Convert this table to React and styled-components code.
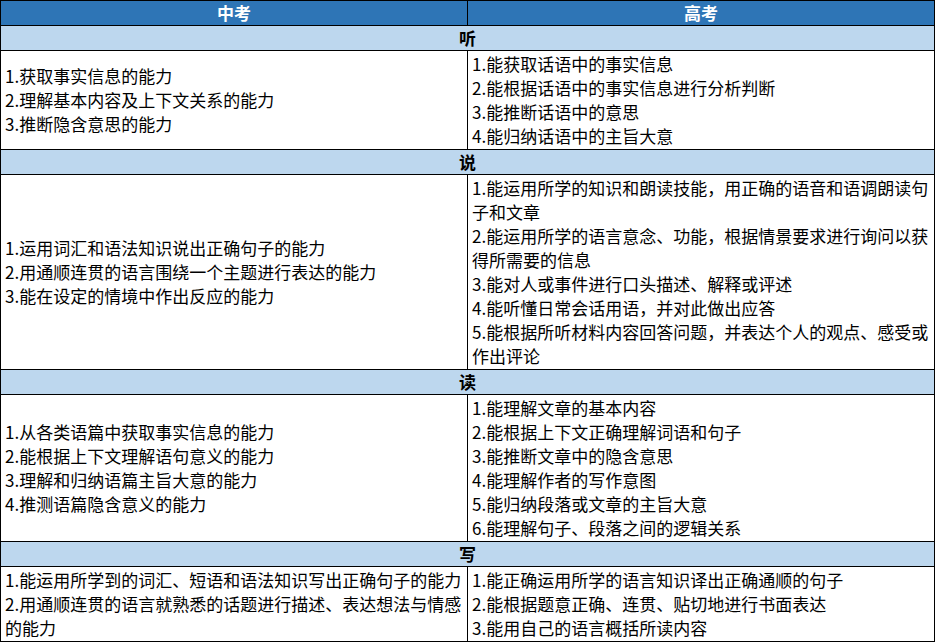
import React from "react";
import styled, { createGlobalStyle } from "styled-components";

const GlobalStyle = createGlobalStyle`
  body {
    margin: 0;
    background: #fff;
    font-family: "Noto Sans CJK SC", "Noto Sans", sans-serif;
  }
`;

const Table = styled.table`
  width: 935px;
  border-collapse: collapse;
  table-layout: fixed;
  font-size: 17px;
  line-height: 24px;
  color: #000;
`;

const HeadCell = styled.th`
  background: #2e75b6;
  color: #fff;
  font-weight: bold;
  text-align: center;
  border: 1px solid #000;
  padding: 0 4px;
  height: 24px;
`;

const SectionCell = styled.td`
  background: #bdd7ee;
  font-weight: bold;
  text-align: center;
  border: 1px solid #000;
  padding: 0 4px;
  height: 24px;
`;

const Cell = styled.td`
  border: 1px solid #000;
  padding: 1px 4px;
  vertical-align: middle;
  text-align: left;
`;

const Line = styled.div`
  white-space: normal;
  word-break: break-all;
`;

const sections = [
  {
    title: "听",
    zhong: [
      "1.获取事实信息的能力",
      "2.理解基本内容及上下文关系的能力",
      "3.推断隐含意思的能力",
    ],
    gao: [
      "1.能获取话语中的事实信息",
      "2.能根据话语中的事实信息进行分析判断",
      "3.能推断话语中的意思",
      "4.能归纳话语中的主旨大意",
    ],
  },
  {
    title: "说",
    zhong: [
      "1.运用词汇和语法知识说出正确句子的能力",
      "2.用通顺连贯的语言围绕一个主题进行表达的能力",
      "3.能在设定的情境中作出反应的能力",
    ],
    gao: [
      "1.能运用所学的知识和朗读技能，用正确的语音和语调朗读句子和文章",
      "2.能运用所学的语言意念、功能，根据情景要求进行询问以获得所需要的信息",
      "3.能对人或事件进行口头描述、解释或评述",
      "4.能听懂日常会话用语，并对此做出应答",
      "5.能根据所听材料内容回答问题，并表达个人的观点、感受或作出评论",
    ],
  },
  {
    title: "读",
    zhong: [
      "1.从各类语篇中获取事实信息的能力",
      "2.能根据上下文理解语句意义的能力",
      "3.理解和归纳语篇主旨大意的能力",
      "4.推测语篇隐含意义的能力",
    ],
    gao: [
      "1.能理解文章的基本内容",
      "2.能根据上下文正确理解词语和句子",
      "3.能推断文章中的隐含意思",
      "4.能理解作者的写作意图",
      "5.能归纳段落或文章的主旨大意",
      "6.能理解句子、段落之间的逻辑关系",
    ],
  },
  {
    title: "写",
    zhong: [
      "1.能运用所学到的词汇、短语和语法知识写出正确句子的能力",
      "2.用通顺连贯的语言就熟悉的话题进行描述、表达想法与情感的能力",
    ],
    gao: [
      "1.能正确运用所学的语言知识译出正确通顺的句子",
      "2.能根据题意正确、连贯、贴切地进行书面表达",
      "3.能用自己的语言概括所读内容",
    ],
  },
];

export default function App() {
  return (
    <>
      <GlobalStyle />
      <Table>
        <thead>
          <tr>
            <HeadCell>中考</HeadCell>
            <HeadCell>高考</HeadCell>
          </tr>
        </thead>
        <tbody>
          {sections.map((s) => (
            <React.Fragment key={s.title}>
              <tr>
                <SectionCell colSpan={2}>{s.title}</SectionCell>
              </tr>
              <tr>
                <Cell>
                  {s.zhong.map((t) => (
                    <Line key={t}>{t}</Line>
                  ))}
                </Cell>
                <Cell>
                  {s.gao.map((t) => (
                    <Line key={t}>{t}</Line>
                  ))}
                </Cell>
              </tr>
            </React.Fragment>
          ))}
        </tbody>
      </Table>
    </>
  );
}
